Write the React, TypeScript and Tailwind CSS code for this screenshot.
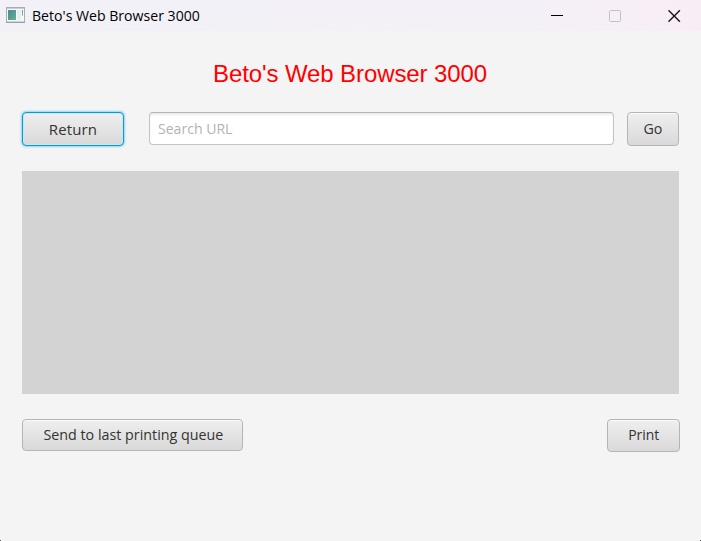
import type { ReactNode } from "react";

function WindowIcon() {
  return (
    <svg width="19" height="16" viewBox="0 0 19 16" className="-mt-px shrink-0">
      <defs>
        <linearGradient id="pane" x1="0" y1="0" x2="1" y2="1">
          <stop offset="0" stopColor="#4c86a0" />
          <stop offset="1" stopColor="#62b384" />
        </linearGradient>
        <linearGradient id="strip" x1="0" y1="0" x2="0" y2="1">
          <stop offset="0" stopColor="#4f8fc0" />
          <stop offset="1" stopColor="#8fd0a4" />
        </linearGradient>
      </defs>
      <rect x="0.5" y="0.5" width="18" height="14.5" fill="#f6f8f8" stroke="#a9adb8" />
      <path d="M1 1.5h17" stroke="#c9ced6" />
      <rect x="2" y="3" width="8" height="10" fill="url(#pane)" />
      <rect x="11" y="3" width="4" height="10" fill="#e9eeee" />
      <rect x="16" y="3" width="1" height="6" fill="url(#strip)" />
      <path d="M0 15.5h19" stroke="#9b9fa9" />
    </svg>
  );
}

function TitleBar() {
  return (
    <header className="flex h-[31px] items-center bg-gradient-to-r from-[#f2f1f8] via-[#f4f0f7] via-75% to-[#f9edf5] pl-1.5">
      <WindowIcon />
      <span className="ml-[7px] flex-1 origin-left scale-x-[0.94] whitespace-nowrap pb-0.5 text-[15px] leading-5 text-black">
        Beto's Web Browser 3000
      </span>
      <div className="flex pr-5">
        <svg width="12" height="12" viewBox="0 0 12 12">
          <path d="M0 5.5h12" stroke="#000" />
        </svg>
        <svg width="12" height="12" viewBox="0 0 12 12" className="ml-[46px]">
          <rect x="0.5" y="0.5" width="11" height="11" rx="1" fill="none" stroke="#c5c0c7" />
        </svg>
        <svg width="13" height="12" viewBox="0 0 13 12" className="ml-[47px]">
          <path d="M0.5 0.3l11.4 11.4M11.9 0.3L0.5 11.7" stroke="#111" strokeWidth="1.4" />
        </svg>
      </div>
    </header>
  );
}

function Button({ className, label, children }: { className: string; label: string; children: ReactNode }) {
  return (
    <button
      className={`flex items-center justify-center whitespace-nowrap rounded-[4px] bg-gradient-to-b from-[#efefef] to-[#d9d9d9] text-[#333] ${className}`}
    >
      <span className={label}>{children}</span>
    </button>
  );
}

export default function App() {
  return (
    <div className="flex h-[541px] w-[701px] flex-col overflow-hidden bg-[#f4f4f4] font-['Open_Sans','Noto_Sans',sans-serif] text-[15px]">
      <TitleBar />
      <main className="flex flex-col px-[22px]">
        <h1 className="mt-[29px] h-7 whitespace-nowrap pr-px text-center font-['Liberation_Sans',Arial,sans-serif] text-[24px] leading-7 tracking-[-0.1px] text-[#ff0000]">
          Beto's Web Browser 3000
        </h1>
        <div className="mt-6 flex h-[34px] items-start">
          <Button
            className="h-[34px] w-[102px] border border-[#039ed3] pt-px shadow-[0_0_2px_1px_#8fd6ee,inset_0_0_1px_0_#039ed3,inset_0_0_0_1px_#e6eef1]"
            label="tracking-[0.15px]"
          >
            Return
          </Button>
          <div className="ml-[25px] flex h-[33px] w-[465px] items-center rounded-[4px] border border-[#c4c4c4] border-t-[#b4b4b4] bg-white px-2 shadow-[inset_0_2px_2px_#ededed]">
            <span className="origin-left scale-x-[0.937] whitespace-nowrap text-[#b3b3b3]">Search URL</span>
          </div>
          <Button
            className="ml-[13px] h-[34px] w-[52px] border border-[#b5b5b5] pb-0.5 shadow-[inset_0_1px_0_#fafafa]"
            label="scale-x-[0.95]"
          >
            Go
          </Button>
        </div>
        <div className="mt-[25px] h-[223px] bg-[#d3d3d3]" />
        <div className="-mr-px mt-[25px] flex items-start justify-between">
          <Button
            className="h-8 w-[221px] border border-[#b5b5b5] pb-0.5 pl-px shadow-[inset_0_1px_0_#fafafa]"
            label="scale-x-[0.953]"
          >
            Send to last printing queue
          </Button>
          <Button
            className="h-[33px] w-[73px] border border-[#b5b5b5] pb-[3px] shadow-[inset_0_1px_0_#fafafa]"
            label="scale-x-[0.93]"
          >
            Print
          </Button>
        </div>
      </main>
      <div className="mt-auto flex justify-between">
        <i className="size-px bg-[#555]" />
        <i className="size-px bg-[#555]" />
      </div>
    </div>
  );
}
